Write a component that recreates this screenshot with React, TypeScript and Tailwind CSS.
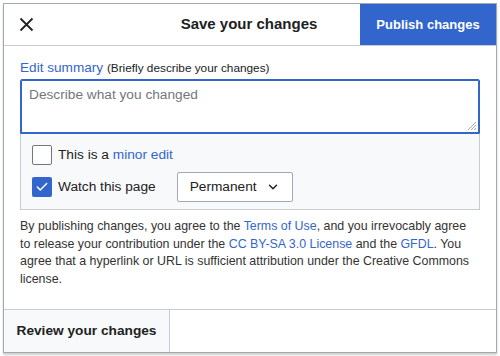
import { Check, ChevronDown } from "lucide-react";

export default function App() {
  return (
    <div className="w-[500px] h-[356px] bg-white pt-[3px] pl-[3px] font-['Liberation_Sans',Arial,sans-serif] text-[#202122]">
      <div className="w-[494px] h-[350px] flex flex-col bg-white border border-[#a2a9b1] shadow-[0_2px_2px_rgba(0,0,0,0.2)]">
        {/* Header */}
        <div className="h-[42px] flex items-stretch border-b border-[#c8ccd1]">
          <button className="w-[44px] flex items-center justify-center">
            <svg width="15" height="15" viewBox="0 0 20 20" className="ml-[1px]">
              <path d="M2 2 L18 18 M18 2 L2 18" stroke="#202122" strokeWidth="2.4" fill="none" />
            </svg>
          </button>
          <div className="flex-1 flex items-center justify-center pl-[90px] text-[15px] font-bold">
            Save your changes
          </div>
          <button className="w-[136px] bg-[#3366cc] text-white text-[13px] font-bold flex items-center justify-center">
            Publish changes
          </button>
        </div>

        {/* Body */}
        <div className="flex-1 px-4 pt-[13px]">
          <div className="text-[13.6px] leading-[18px]">
            <span className="text-[#3366cc]">Edit summary</span>{" "}
            <span className="text-[11.8px]">(Briefly describe your changes)</span>
          </div>
          <div className="mt-[2px] h-[55px] border border-[#3366cc] shadow-[inset_0_0_0_1px_#3366cc] rounded-t-[2px] relative px-[8px] pt-[5px] text-[13.7px] text-[#72777d]">
            Describe what you changed
            <svg width="10" height="10" viewBox="0 0 10 10" className="absolute right-[2px] bottom-[2px]">
              <path d="M9 1 L1 9 M9 4 L4 9 M9 7 L7 9" stroke="#a2a9b1" strokeWidth="1" />
            </svg>
          </div>
          <div className="bg-[#f8f9fa] border border-t-0 border-[#c8ccd1] pl-[11px] pt-[11px] pb-[7px] text-[13.7px]">
            <div className="flex items-center gap-[6px] h-[20px]">
              <span className="w-[20px] h-[20px] rounded-[2px] border border-[#72777d] bg-white" />
              <span>
                This is a <span className="text-[#3366cc]">minor edit</span>
              </span>
            </div>
            <div className="flex items-center mt-[7px]">
              <span className="w-[20px] h-[20px] rounded-[2px] bg-[#3366cc] flex items-center justify-center">
                <Check size={14} color="white" strokeWidth={2.5} />
              </span>
              <span className="ml-[6px]">Watch this page</span>
              <div className="ml-[21px] w-[116px] h-[30px] rounded-[2px] border border-[#a2a9b1] bg-white flex items-center justify-between pl-[12px] pr-[12px]">
                <span>Permanent</span>
                <ChevronDown size={14} strokeWidth={2.5} />
              </div>
            </div>
          </div>
          <p className="mt-[8px] pr-[10px] text-[12.4px] leading-[17.7px] text-[#333]">
            By publishing changes, you agree to the <span className="text-[#3366cc]">Terms of Use</span>, and you irrevocably agree to release your contribution under the{" "}
            <span className="text-[#3366cc]">CC BY-SA 3.0 License</span> and the <span className="text-[#3366cc]">GFDL</span>. You agree that a hyperlink or URL is sufficient attribution under the Creative Commons license.
          </p>
        </div>

        {/* Footer */}
        <div className="h-[43px] flex border-t border-[#c8ccd1]">
          <button className="w-[166px] bg-[#f8f9fa] border-r border-[#c8ccd1] text-[13.7px] font-bold flex items-center justify-center">
            Review your changes
          </button>
        </div>
      </div>
    </div>
  );
}
